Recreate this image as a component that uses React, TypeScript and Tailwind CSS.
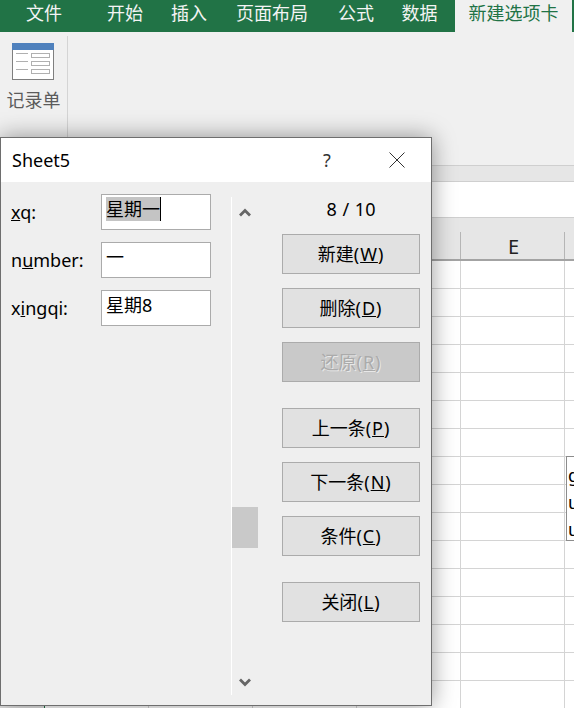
import React from 'react';

const font = "font-['Noto_Sans','Noto_Sans_CJK_SC',sans-serif]";

const tabs = [
  { label: '文件', w: 'w-[88px]' },
  { label: '开始', w: 'w-[74px]' },
  { label: '插入', w: 'w-[54px]' },
  { label: '页面布局', w: 'w-[112px]' },
  { label: '公式', w: 'w-[56px]' },
  { label: '数据', w: 'w-[71px]' },
];

const rows = Array.from({ length: 16 }, (_, i) => i);
const cols = ['', '', '', '', 'E', ''];

const FormIcon = () => (
  <svg width="43" height="38" viewBox="0 0 43 38" fill="none">
    <rect x="0.5" y="0.5" width="41" height="36" fill="#fff" stroke="#7f7f7f" />
    <rect x="0" y="0" width="42" height="7" fill="#4f81bd" />
    <path d="M4 10.5h12M4 18.5h12M4 26.5h12" stroke="#b0b0b0" />
    <rect x="19.5" y="10.5" width="18" height="4" stroke="#b0b0b0" />
    <rect x="19.5" y="18.5" width="18" height="4" stroke="#b0b0b0" />
    <rect x="19.5" y="26.5" width="18" height="4" stroke="#b0b0b0" />
  </svg>
);

const Field = ({ pre, ul, post, children }: { pre: string; ul: string; post: string; children: React.ReactNode }) => (
  <div className="flex items-center h-9">
    <span className="w-[100px] pl-[10px] text-[18px] text-black">
      {pre}
      <u>{ul}</u>
      {post}
    </span>
    <div className="w-[110px] h-9 border border-[#ababab] bg-white pl-[4px] text-[18px] leading-[24px] pt-[2px] text-black">
      {children}
    </div>
  </div>
);

const Btn = ({ label, k, mt, off }: { label: string; k: string; mt: string; off?: boolean }) => (
  <div
    className={`w-[138px] h-10 border border-[#ababab] flex items-center justify-center text-[18px] ${mt} ${
      off ? 'bg-[#c9c9c9] text-[#ababab] [text-shadow:1px_1px_0_#e8e8e8]' : 'bg-[#e1e1e1] text-black'
    }`}
  >
    {label}
    <span className="tracking-[1px]">
      (<u>{k}</u>)
    </span>
  </div>
);

const Chevron = ({ down }: { down?: boolean }) => (
  <svg width="12" height="9" viewBox="0 0 12 9" fill="none" className={down ? 'rotate-180' : ''}>
    <path d="M1 7.5L6 2.5L11 7.5" stroke="#666" strokeWidth="2.8" />
  </svg>
);

export default function App() {
  return (
    <div className={`relative w-[574px] h-[708px] overflow-hidden bg-white ${font}`}>
      {/* ribbon tabs */}
      <div className="flex h-8 bg-[#217346] text-[18px] leading-[26px] text-[#f4f4f4]">
        {tabs.map((t) => (
          <div key={t.label} className={`${t.w} text-center`}>
            {t.label}
          </div>
        ))}
        <div className="w-[117px] bg-[#f0f0f0] text-center text-[#217346]">新建选项卡</div>
      </div>

      {/* ribbon body */}
      <div className="flex h-[133px] bg-[#f0f0f0]">
        <div className="w-[67px] mt-1 h-[128px] flex flex-col items-center pt-[7px]">
          <FormIcon />
          <span className="mt-[7px] text-[18px] leading-6 text-[#5b5b5b]">记录单</span>
        </div>
        <div className="w-px h-[128px] mt-1 bg-[#d4d4d4]" />
      </div>

      {/* formula bar */}
      <div className="h-[17px] bg-[#e6e6e6] border-y border-[#cfcfcf]" />
      <div className="h-[35px] bg-white" />

      {/* column headers */}
      <div className="flex h-11 bg-[#e6e6e6] border-t border-[#cfcfcf] border-b-2 border-b-[#a3a3a3]">
        <div className="w-[45px] shrink-0" />
        {cols.map((c, i) => (
          <div
            key={i}
            className="w-[104px] shrink-0 mt-[14px] pt-[2px] pl-[2px] border-r border-[#b5b5b5] text-center text-[20px] leading-[26px] text-[#222]"
          >
            {c}
          </div>
        ))}
      </div>

      {/* sheet */}
      <div className="flex">
        <div className="w-[44px] h-[448px] bg-[#e6e6e6] shrink-0" />
        <div className="w-px h-[448px] bg-[#217346] shrink-0" />
        <div className="flex-1">
          {rows.map((r) => (
            <div key={r} className="flex h-7 border-b border-[#d4d4d4]">
              {cols.map((_, i) => (
                <div key={i} className="w-[104px] shrink-0 border-r border-[#d4d4d4]" />
              ))}
            </div>
          ))}
        </div>
      </div>

      {/* comment cell */}
      <div className="absolute left-[566px] top-[456px] w-[20px] h-[85px] border border-[#8c8c8c] bg-white pl-[1px] pt-[5px] text-[18px] leading-[27px] text-black">
        <div>g</div>
        <div>u</div>
        <div>u</div>
      </div>

      {/* data form dialog */}
      <div className="absolute left-0 top-[137px] w-[432px] h-[569px] flex flex-col border border-[#6e6e6e] bg-[#efefef] shadow-[0_0_22px_rgba(0,0,0,0.4)]">
        <div className="h-[44px] shrink-0 bg-white flex items-center text-[18px] text-black">
          <span className="ml-[11px] w-[300px]">Sheet5</span>
          <span className="w-[30px] text-center text-[#333]">?</span>
          <svg width="16" height="16" viewBox="0 0 16 16" className="ml-[47px]" fill="none">
            <path d="M0.5 0.5L15.5 15.5M15.5 0.5L0.5 15.5" stroke="#333" />
          </svg>
        </div>

        <div className="flex flex-1">
          <div className="w-[230px] shrink-0 flex flex-col gap-3 pt-3">
            <Field pre="" ul="x" post="q:">
              <span className="inline-block h-6 bg-[#c4c4c4]">星期一</span>
              <span className="inline-block align-top w-px h-6 bg-black" />
            </Field>
            <Field pre="n" ul="u" post="mber:">
              一
            </Field>
            <Field pre="x" ul="i" post="ngqi:">
              星期8
            </Field>
          </div>

          <div className="w-[27px] h-[498px] mt-[15px] shrink-0 border-l border-white flex flex-col">
            <div className="h-[30px] flex items-center justify-center">
              <Chevron />
            </div>
            <div className="h-[280px]" />
            <div className="h-[41px] bg-[#c9c9c9]" />
            <div className="flex-1" />
            <div className="h-[30px] flex items-center justify-center pt-1">
              <Chevron down />
            </div>
          </div>

          <div className="ml-6 flex flex-col">
            <div className="h-[52px] pt-[13px] text-center text-[18px] leading-[28px] [word-spacing:1px] text-black">
              8 / 10
            </div>
            <Btn label="新建" k="W" mt="" />
            <Btn label="删除" k="D" mt="mt-[14px]" />
            <Btn label="还原" k="R" mt="mt-[14px]" off />
            <Btn label="上一条" k="P" mt="mt-[26px]" />
            <Btn label="下一条" k="N" mt="mt-[14px]" />
            <Btn label="条件" k="C" mt="mt-[14px]" />
            <Btn label="关闭" k="L" mt="mt-[26px]" />
          </div>
        </div>
      </div>
    </div>
  );
}
